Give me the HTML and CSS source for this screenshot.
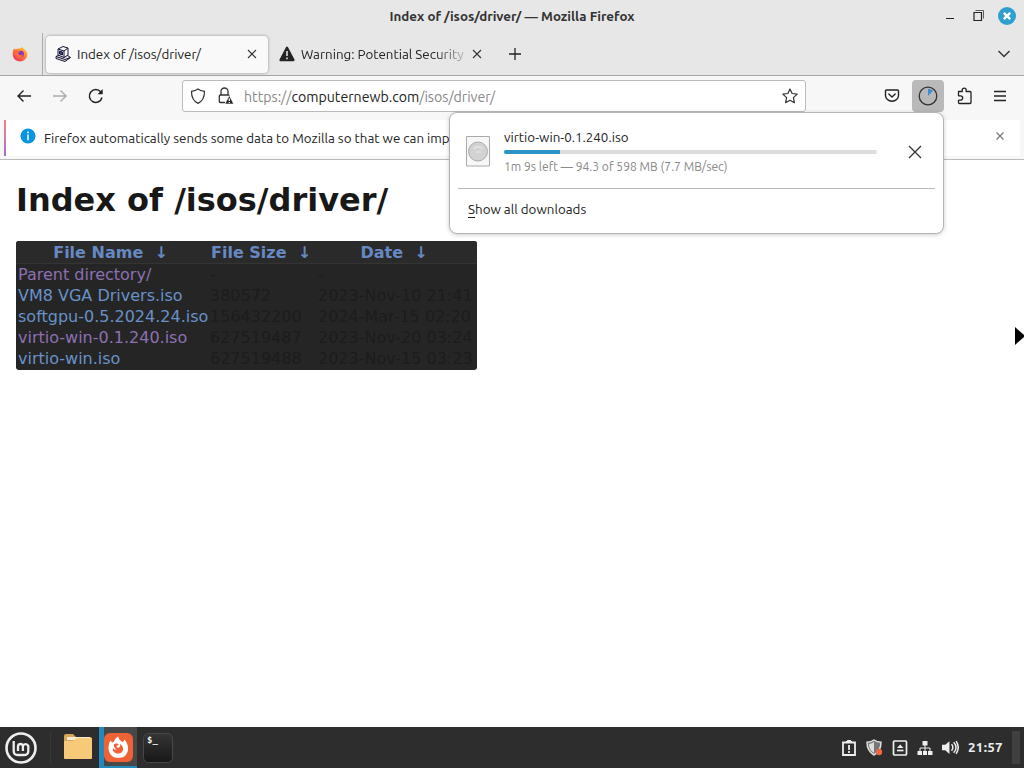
FILE: index.html
```html
<!DOCTYPE html>
<html lang="en">
<head>
    <meta charset="UTF-8">
    <title>Index of /isos/driver/</title>
    <link rel="stylesheet" href="styles.css">
</head>
<body>
    <header class="titlebar">
        <div class="window-title">Index of /isos/driver/ — Mozilla Firefox</div>
        <div class="window-buttons">
            <svg width="9" height="18" viewBox="0 0 9 18"><path d="M1 11.5h8" stroke="#222"/></svg>
            <svg width="11" height="18" viewBox="0 0 11 18" fill="none" stroke="#222"><path d="M1 5.5h7.5v8H1z" stroke-width="1.2"/><path d="M2.5 3.5h8v8" stroke-width=".7"/></svg>
            <svg width="18" height="18" viewBox="0 0 18 18"><circle cx="9" cy="9" r="9" fill="#2f9fd0"/><path d="M5.8 5.8l6.4 6.4M12.2 5.8l-6.4 6.4" stroke="#fff" stroke-width="2.4"/></svg>
        </div>
    </header>

    <nav class="tabs">
        <div class="pinned">
            <svg width="16" height="16" viewBox="0 0 16 16">
                <defs>
                    <linearGradient id="fire" x1="1" y1="0" x2=".3" y2="1"><stop offset="0" stop-color="#ffd93b"/><stop offset=".45" stop-color="#ff8b2c"/><stop offset="1" stop-color="#f0325c"/></linearGradient>
                </defs>
                <path d="M1 4.5l1.2-2 1.3 1C5 2.5 7 2.5 8.5 2.6L10 1c1 1.6 4.5 3 5.2 6 .8 4.5-3 8.500-7 8.500S.7 12.500.7 8.500C.7 7 .8 5.500 1 4.500z" fill="url(#fire)"/>
                <circle cx="8.6" cy="8" r="3.300" fill="#8b37c5"/>
                <path d="M2.500 5c2-.8 4.500-.5 5.500 1-2 0-2.200 1.500-1 2.500 1.200 1 3 .5 3.500-.5.500 2.500-1 4-3.500 3.700C4 11.300 2.500 8.500 2.500 5z" fill="#fb6c3c"/>
            </svg>
        </div>
        <div class="tab active">
            <svg width="16" height="18" viewBox="0 0 16 18" stroke="#171633" stroke-linejoin="round">
                <path d="M1 11.500l3-1.500h8l3.500 2.500-5.500 4L1 13.500z" fill="#dedee8"/>
                <path d="M3 4l5-2.500 5 1.500v7l-4 2.500-6-2.500z" fill="#f5f5fa"/>
                <path d="M1 11.500l9 3 5.500-2M3 4l6 2v6.500M9 6l4-3" fill="none"/>
                <path d="M4.500 6l3 1v3l-3-1z" fill="#4040a0"/>
            </svg>
            <span class="tab-label">Index of /isos/driver/</span>
            <svg class="tab-close" width="10" height="10" viewBox="0 0 10 10"><path d="M1 1l8 8M9 1L1 9" stroke="#333" stroke-width="1.1"/></svg>
        </div>
        <div class="tab">
            <svg width="16" height="16" viewBox="0 0 16 16"><path d="M8 1.8L14.400 14H1.600z" fill="#252525" stroke="#252525" stroke-width="2.400" stroke-linejoin="round"/><path d="M8 5v5M8 11.500v1.800" stroke="#eee" stroke-width="1.500"/></svg>
            <span class="tab-label faded">Warning: Potential Security</span>
            <svg class="tab-close" width="10" height="10" viewBox="0 0 10 10"><path d="M1 1l8 8M9 1L1 9" stroke="#333" stroke-width="1.1"/></svg>
        </div>
        <svg class="new-tab" width="12" height="12" viewBox="0 0 12 12"><path d="M6 0v12M0 6h12" stroke="#222" stroke-width="1.3"/></svg>
        <svg class="list-tabs" width="14" height="10" viewBox="0 0 14 10"><path d="M1.5 2L7 7.5 12.5 2" fill="none" stroke="#333" stroke-width="1.4"/></svg>
    </nav>

    <div class="toolbar">
        <div class="nav-buttons">
            <svg width="16" height="16" viewBox="0 0 16 16" fill="none" stroke="#222" stroke-width="1.4"><path d="M15 8H1.500M7.500 2.500L2 8l5.500 5.500"/></svg>
            <svg width="16" height="16" viewBox="0 0 16 16" fill="none" stroke="#aaa" stroke-width="1.4"><path d="M1 8h13.500M8.500 2.500L14 8l-5.500 5.500"/></svg>
            <svg width="16" height="16" viewBox="0 0 16 16" fill="none" stroke="#222" stroke-width="1.5"><path d="M14 9.500A6.400 6.400 0 1 1 12.800 4L14 5.300"/><path d="M14.700 1v5.200H9.500z" fill="#222" stroke="none"/></svg>
        </div>
        <div class="urlbar">
            <svg width="16" height="16" viewBox="0 0 16 16" fill="none" stroke="#333" stroke-width="1.2"><path d="M8 .9c2 1.500 4 2 6.500 2.500.1 5.500-1.500 9.500-6.500 12C3 12.900 1.400 8.900 1.500 3.400 4 2.900 6 2.400 8 .9z"/></svg>
            <svg width="16" height="18" viewBox="0 0 16 18" fill="none" stroke="#333" stroke-width="1.3"><path d="M7 15.500H2.300q-1 0-1-1V9q0-1 1-1h8q1 0 1 1M3 8V4.500a3.500 3.500 0 0 1 7 0V8"/><path d="M11.300 8.500l4.400 8.500H6.900z" fill="#222" stroke="#fff" stroke-width=".6"/><path d="M11.300 11.500v2.500M11.300 15v1" stroke="#fff"/></svg>
            <span class="url">https://<b>computernewb.com</b>/isos/driver/</span>
            <svg class="star" width="16" height="16" viewBox="0 0 16 16" fill="none" stroke="#333" stroke-width="1.2" stroke-linejoin="round"><path d="M8 1l2.100 4.500 5.100.6-3.800 3.500 1 5.100L8 12.200l-4.400 2.500 1-5.100L.8 6.100l5.100-.6z"/></svg>
        </div>
        <div class="tools">
            <svg width="16" height="14" viewBox="0 0 16 14" fill="none" stroke="#222" stroke-width="1.4" stroke-linecap="round" stroke-linejoin="round"><path d="M2.500 1h11q1 0 1 1v4.500a6.500 5.700 0 0 1-13 0V2q0-1 1-1zM4.800 5L8 8l3.200-3"/></svg>
            <div class="download-button">
                <svg width="20" height="20" viewBox="0 0 20 20"><circle cx="10" cy="10" r="8.800" fill="none" stroke="#333" stroke-width="1.3"/><path d="M10 10V2.800a7.200 7.200 0 0 1 5 2z" fill="#3c8fd0"/></svg>
            </div>
            <svg width="16" height="18" viewBox="0 0 16 18" fill="none" stroke="#222" stroke-width="1.3" stroke-linejoin="round"><path d="M1.500 4.500h3.700c.3-.3 0-.7 0-1.300a2 2 0 0 1 4 0c0 .6-.3 1 0 1.300H13q1 0 1 1v10q0 1-1 1H2.500q-1 0-1-1v-2.200c.8-.5 1.200-.1 2-.1a2.200 2.200 0 0 0 0-4.400c-.8 0-1.200.4-2-.1z"/></svg>
            <svg class="app-menu" width="12" height="12" viewBox="0 0 12 12"><path d="M0 1.500h12M0 6h12M0 10.500h12" stroke="#222" stroke-width="1.3"/></svg>
        </div>

        <div class="downloads-panel">
            <div class="download">
                <svg width="25" height="31" viewBox="0 0 25 31"><path d="M.5.5h23v29.500H.5z" fill="#f7f7f7" stroke="#aaa"/><circle cx="12" cy="15.500" r="9.500" fill="#d2d2d2" stroke="#aaa"/><path d="M7.500 13c3-3 7-3 9 0M10 16h5" fill="none" stroke="#e4e4e4" stroke-width="1.5"/></svg>
                <div class="download-info">
                    <div class="file-name">virtio-win-0.1.240.iso</div>
                    <div class="progress"><div class="progress-value"></div></div>
                    <div class="status">1m 9s left — 94.3 of 598 MB (7.7 MB/sec)</div>
                </div>
                <svg width="14" height="14" viewBox="0 0 14 14"><path d="M1 1l12 12M13 1L1 13" stroke="#333" stroke-width="1.3"/></svg>
            </div>
            <div class="show-all"><span><u>S</u>how all downloads</span></div>
        </div>
    </div>

    <div class="notification">
        <div class="notice">
            <svg width="16" height="16" viewBox="0 0 16 16"><circle cx="8" cy="8" r="7.500" fill="#0795df"/><path d="M8 3.500v1.700M8 6.500v5.800" stroke="#fff" stroke-width="1.500"/></svg>
            <span class="notice-text">Firefox automatically sends some data to Mozilla so that we can imp</span>
            <svg class="notice-close" width="10" height="10" viewBox="0 0 10 10"><path d="M1.500 1.500l7 7M8.500 1.500l-7 7" stroke="#777" stroke-width="1.2"/></svg>
        </div>
    </div>

    <main>
        <h1>Index of /isos/driver/</h1>
        <table>
            <thead>
                <tr><th class="name">File Name&nbsp; ↓</th><th class="size">File Size&nbsp; ↓</th><th class="date">Date&nbsp; ↓</th></tr>
            </thead>
            <tbody>
                <tr><td><a class="visited">Parent directory/</a></td><td>-</td><td>-</td></tr>
                <tr><td><a>VM8 VGA Drivers.iso</a></td><td>380572</td><td>2023-Nov-10 21:41</td></tr>
                <tr><td><a>softgpu-0.5.2024.24.iso</a></td><td>156432200</td><td>2024-Mar-15 02:20</td></tr>
                <tr><td><a class="visited">virtio-win-0.1.240.iso</a></td><td>627519487</td><td>2023-Nov-20 03:24</td></tr>
                <tr><td><a>virtio-win.iso</a></td><td>627519488</td><td>2023-Nov-15 03:23</td></tr>
            </tbody>
        </table>
        <svg class="cursor" width="10" height="20" viewBox="0 0 10 20"><path d="M1 1l10 9-10 9z"/></svg>
    </main>

    <footer class="panel">
        <div class="menu">
            <svg width="32" height="32" viewBox="0 0 32 32" fill="none" stroke="#eee"><circle cx="16" cy="16" r="14.500" stroke-width="2.600"/><path d="M8.700 9v10q0 4 4 4h6.600q4 0 4-4v-5a2.900 2.900 0 0 0-5.400 0v5M17.900 14a2.500 2.500 0 0 0-4.900 0v5" stroke-width="2.300"/></svg>
        </div>
        <div class="launchers">
            <svg class="folder" width="28" height="26" viewBox="0 0 28 26"><path d="M0 2q0-2 2-2h7l3 3h14q2 0 2 2v5H0z" fill="#d8a657"/><path d="M3 3h23v3H3z" fill="#f7ead2"/><path d="M0 7h9l4-3h15v20q0 1-1 1H1q-1 0-1-1z" fill="#f6ca78"/></svg>
            <div class="launcher current">
                <svg width="29" height="29" viewBox="0 0 29 29"><rect width="29" height="29" rx="6" fill="#ee6235"/><path d="M6.500 7.500L8 9.500l2-.8c.5-2.700 2.500-4.200 4.500-5.200 0 3 2 3.500 3.500 5.500l1.500-.5 1-2C27 14 24.500 25 14.500 25 4.500 25 2.500 14 6.500 7.500z" fill="#fff"/><path d="M10 11c2-1 4.500-.5 5 1-2.200.2-3 1.500-2.200 2.300 1.700 1.200 4 0 3.200-3.300 5 3 3.700 9.500-1.700 9.500-4 0-6-2.500-5.300-5.500 1 1.500 2 1.800 3.500 1.500-2-1.500-3-3-2.500-5.500z" fill="#ee6235"/></svg>
            </div>
            <svg width="30" height="30" viewBox="0 0 30 30"><defs><linearGradient id="term" x2="0" y2="1"><stop stop-color="#353535"/><stop offset="1" stop-color="#171717"/></linearGradient></defs><rect x=".5" y=".5" width="29" height="29" rx="5" fill="url(#term)" stroke="#484848"/><text x="4" y="10" class="prompt">$_</text></svg>
        </div>
        <div class="tray">
            <svg width="16" height="16" viewBox="0 0 16 16" fill="none" stroke="#eee" stroke-width="1.8"><path d="M2 2.500h12V15H2z"/><path d="M8 5v5M8 11v2M5 2h2V.8h2V2h2"/></svg>
            <svg width="17" height="17" viewBox="0 0 17 17"><path d="M8 1q3 2 7 2.300Q15 12 8 16 1 12 1 3.300 5 3 8 1z" fill="#777" stroke="#ddd" stroke-width="1.5"/><path d="M8 3v11Q3 11 3 5q3-.3 5-2z" fill="#ddd"/><circle cx="13" cy="13" r="3.200" fill="#ed6840"/></svg>
            <svg width="16" height="16" viewBox="0 0 16 16" fill="none" stroke="#eee" stroke-width="1.7"><rect x="1.500" y="1" width="13" height="14" rx="1"/><path d="M5 8l3.200-3.500L11.500 8z" fill="#eee" stroke="none"/><path d="M5 10.500h6.500"/></svg>
            <svg width="16" height="16" viewBox="0 0 16 16" fill="#eee"><path d="M5.500 1h5v4.500h-5zM.5 11h4.500v4H.5zM11 11h4.500v4H11zM6 11h4v4H6z"/><path d="M8 5v6M3 11V8h10v3" fill="none" stroke="#eee"/></svg>
            <svg width="17" height="17" viewBox="0 0 16 16"><path d="M0 5.500h3L7 2v12l-4-3.500H0z" fill="#eee"/><path d="M9 5q2.500 3 0 6M11 3q4.500 5 0 10M13.300 2q4 6 0 12" fill="none" stroke="#eee" stroke-width="1.4"/></svg>
            <span class="clock">21:57</span>
            <div class="show-desktop"></div>
        </div>
    </footer>
</body>
</html>
```
FILE: styles.css
```css
* {
    box-sizing: border-box;
}

body {
    margin: 0;
    width: 1024px;
    height: 768px;
    overflow: hidden;
    display: flex;
    flex-direction: column;
    background: #fff;
    color: #222;
    font-family: 'Ubuntu', 'Noto Sans', sans-serif;
    font-size: 13.36px;
}

svg {
    display: block;
    flex-shrink: 0;
}

.titlebar {
    display: grid;
    grid-template-columns: 1fr auto 1fr;
    align-items: center;
    height: 33px;
    padding-bottom: 1px;
    background: #e7e7e7;
}

.window-title {
    grid-column: 2;
    font-weight: bold;
    color: #333;
}

.window-buttons {
    display: flex;
    justify-content: flex-end;
    gap: 19px;
    padding-right: 8px;
}

.window-buttons svg:last-child {
    margin-left: -5px;
}

.tabs {
    display: flex;
    align-items: center;
    height: 43px;
    background: #e7e7e7;
    border-bottom: 1px solid #a5a5a5;
}

.pinned {
    display: flex;
    align-items: center;
    width: 43px;
    height: 42px;
    padding-left: 12px;
    border-right: 1px solid #aaa;
}

.tab {
    display: flex;
    align-items: center;
    width: 219px;
    height: 37px;
    padding: 0 8px;
    margin-left: 3px;
}

.tab svg:first-child {
    width: 16px;
    margin-right: 6px;
}

.tab.active {
    width: 222px;
    padding-left: 9px;
    padding-right: 7px;
    background: #f9f9f9;
    border-radius: 4px;
    box-shadow: 0 0 3px rgba(0, 0, 0, 0.4);
}

.tab-label {
    white-space: nowrap;
}

.faded {
    width: 167px;
    overflow: hidden;
    mask-image: linear-gradient(to right, #000 80%, transparent 103%);
}

.tab-close {
    margin-left: auto;
    margin-right: 4px;
}

.tab:not(.active) .tab-close {
    margin-right: 0;
}

.new-tab {
    margin-left: 19px;
}

.list-tabs {
    margin-left: auto;
    margin-right: 13px;
}

.toolbar {
    position: relative;
    z-index: 2;
    display: flex;
    align-items: center;
    height: 44px;
    padding-bottom: 4px;
    background: #f7f7f7;
}

.nav-buttons {
    display: flex;
    align-items: center;
    gap: 20px;
    padding-left: 16px;
    width: 182px;
}

.urlbar {
    display: flex;
    align-items: center;
    width: 624px;
    height: 32px;
    padding: 0 7px;
    background: #fff;
    border: 1px solid #bbb;
    border-radius: 3px;
}

.urlbar svg + svg {
    margin-left: 12px;
}

.url {
    margin-left: 10px;
    padding-top: 1px;
    font-size: 14.17px;
    color: #888;
}

.url b {
    font-weight: normal;
    color: #222;
}

.star {
    margin-left: auto;
}

.tools {
    display: flex;
    align-items: center;
    margin-left: auto;
    padding-right: 18px;
}

.download-button {
    display: flex;
    align-items: center;
    justify-content: center;
    width: 32px;
    height: 32px;
    margin: 0 13px 0 12px;
    background: #b9b9b9;
    border-radius: 4px;
}

.app-menu {
    margin-left: 21px;
}

.downloads-panel {
    position: absolute;
    left: 449px;
    top: 36px;
    width: 495px;
    height: 122px;
    padding: 0 8px;
    background: #fff;
    border: 1px solid #b5b5b5;
    border-radius: 8px;
    box-shadow: 0 1px 4px rgba(0, 0, 0, 0.2);
}

.download {
    display: flex;
    align-items: center;
    height: 76px;
    padding: 2px 13px 0 8px;
    border-bottom: 1px solid #bbb;
}

.download-info {
    width: 373px;
    margin: 0 31px 0 13px;
}

.file-name {
    padding-top: 2px;
    line-height: 18px;
}

.progress {
    height: 4px;
    margin: 3px 0 4px;
    background: #ddd;
    border-radius: 2px;
}

.progress-value {
    width: 15%;
    height: 4px;
    background: #2b93c5;
    border-radius: 2px 0 0 2px;
}

.status {
    font-size: 12.1px;
    line-height: 18px;
    color: #888;
}

.show-all {
    display: flex;
    align-items: center;
    height: 40px;
    padding-left: 10px;
}

.show-all u {
    text-underline-offset: 3px;
}

.notification {
    height: 40px;
    padding-right: 4px;
    background: #f7f7f7;
    border-bottom: 1px solid #bbb;
}

.notice {
    display: flex;
    align-items: center;
    height: 36px;
    padding: 0 15px 0 14px;
    margin-left: 4px;
    background: #fff;
    border-left: 2px solid;
    border-image: linear-gradient(#fa8080, #d478b2, #9370ca) 1;
}

.notice-text {
    margin-left: 8px;
    white-space: nowrap;
}

.notice svg {
    margin-top: -4px;
}

.notice-close {
    margin-left: auto;
}

main {
    position: relative;
    flex: 1;
    padding: 0 16px;
    font-family: 'DejaVu Sans', sans-serif;
    font-size: 16px;
}

h1 {
    margin: 21px 0;
    font-size: 32px;
    line-height: 39px;
    color: #181818;
}

table {
    width: 461px;
    table-layout: fixed;
    border-collapse: separate;
    border-spacing: 0;
    background: #252525;
    border-radius: 3px;
    overflow: hidden;
    line-height: 19px;
    color: #1c1c1c;
}

th,
td {
    padding: 1px 2px;
    white-space: nowrap;
}

td + td {
    padding-left: 1px;
}

tr:last-child td {
    padding-bottom: 2px;
}

th {
    padding: 2px 8px 1px 2px;
    background: #2a2a2a;
    border-bottom: 1px solid #343434;
    color: #6689c4;
}

th.name {
    width: 193px;
    padding-right: 6px;
}

.size {
    width: 108px;
}

a {
    color: #6892c8;
}

a.visited {
    color: #8d70b3;
}

.cursor {
    position: absolute;
    right: 0;
    top: 166px;
}

.panel {
    display: flex;
    align-items: center;
    height: 41px;
    background: #2d2d2d;
}

.menu {
    width: 51px;
    padding-left: 5px;
    border-right: 1px solid #383838;
}

.launchers {
    display: flex;
    align-items: center;
    padding-left: 13px;
}

.folder {
    margin-bottom: 2px;
}

.launcher {
    display: flex;
    align-items: center;
    width: 38px;
    height: 41px;
    margin: 0 6px 0 7px;
}

.current {
    padding-top: 1px;
    background: #484848;
    border-left: 5px solid #2489bd;
    border-bottom: 2px solid #2489bd;
}

.prompt {
    font: bold 9px 'DejaVu Sans Mono', monospace;
    fill: #eee;
}

.tray {
    display: flex;
    align-items: center;
    gap: 9px;
    margin-left: auto;
    padding-right: 4px;
}

.clock {
    width: 35px;
    letter-spacing: 0.3px;
    font-weight: bold;
    color: #eee;
}

.show-desktop {
    width: 8px;
    height: 33px;
    background: #404040;
}
```
